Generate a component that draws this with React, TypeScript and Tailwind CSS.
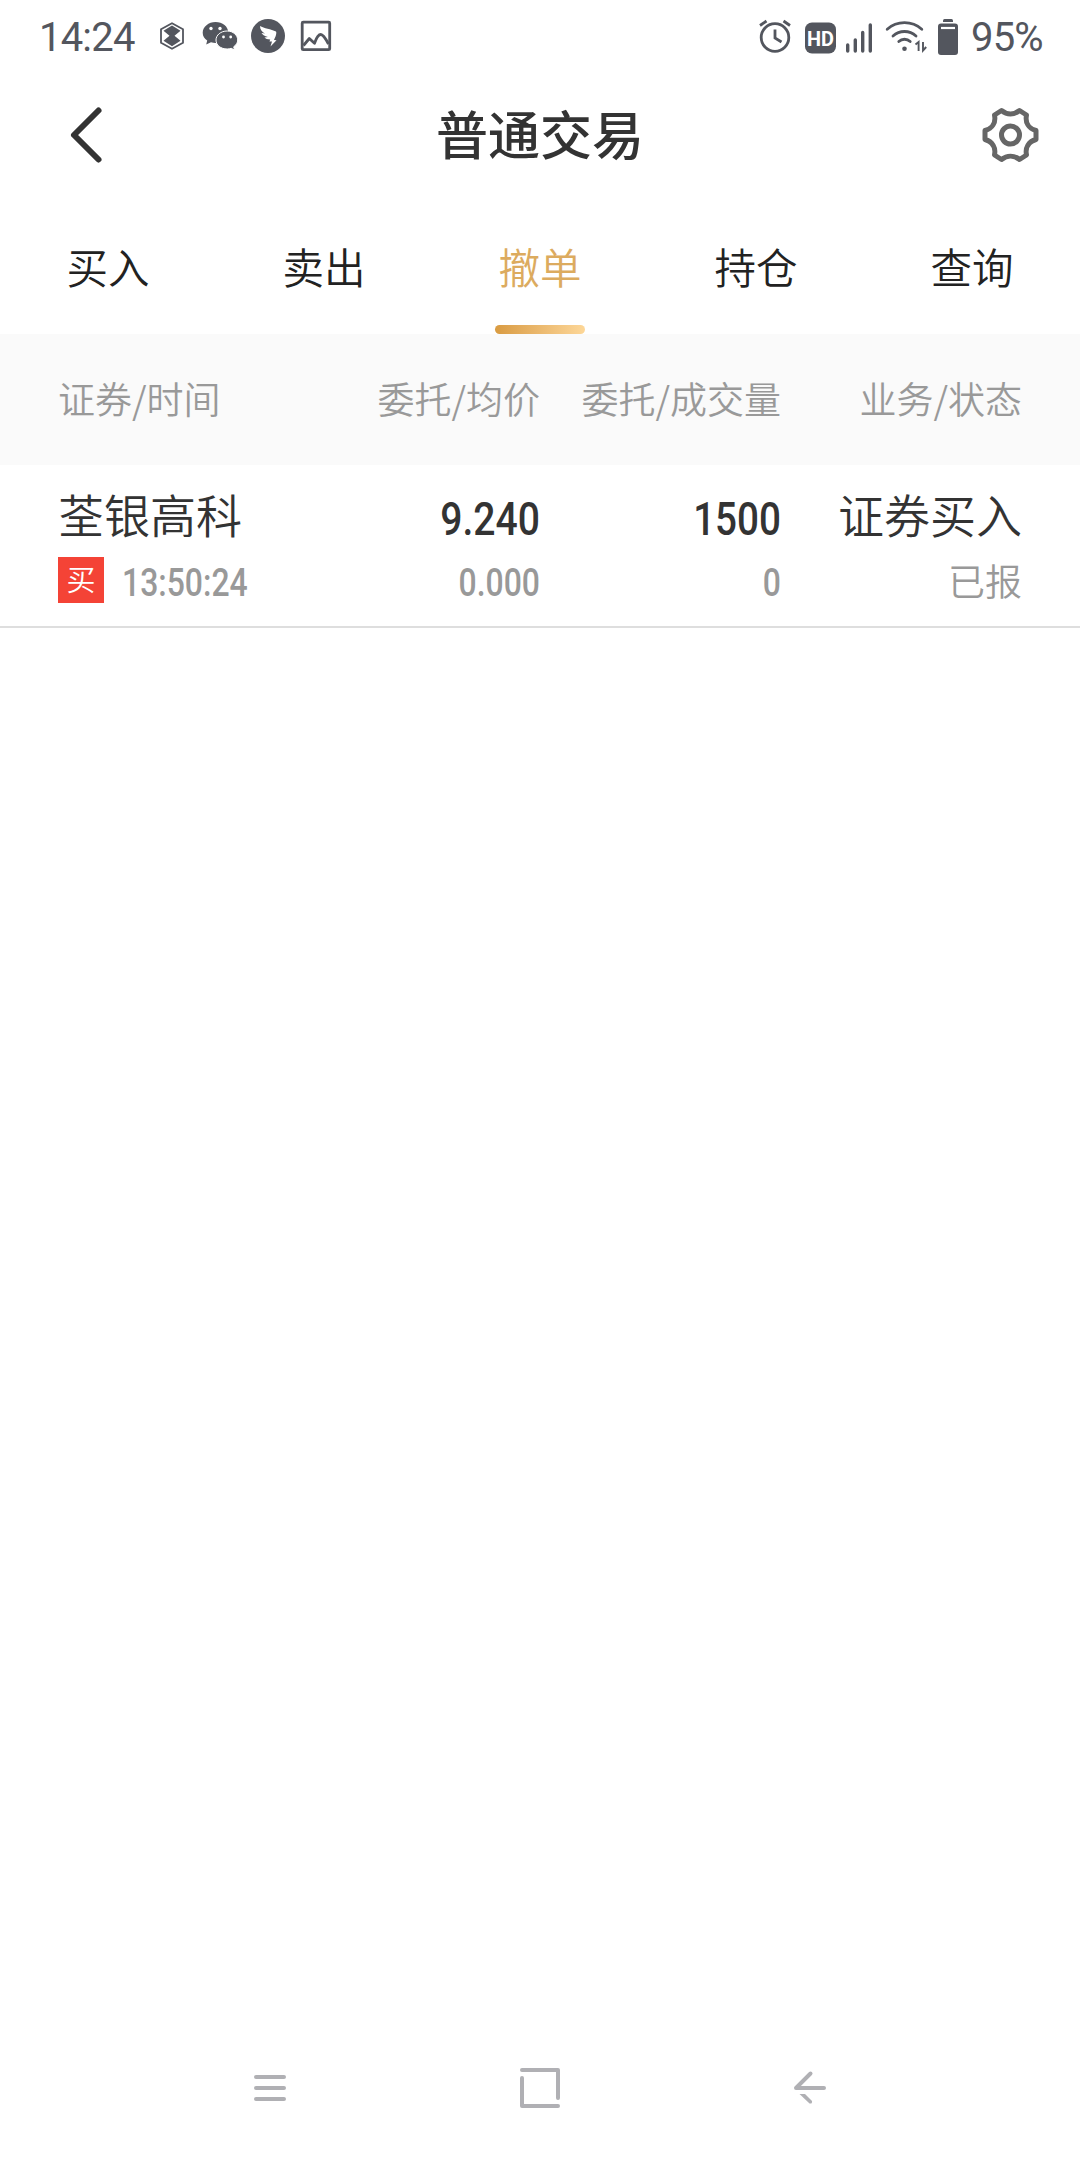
import React from 'react';

interface Order {
    name: string;
    side: string;
    time: string;
    price: string;
    avgPrice: string;
    amount: string;
    filled: string;
    business: string;
    status: string;
}

const tabs = ['买入', '卖出', '撤单', '持仓', '查询'];
const activeTab = '撤单';

const orders: Order[] = [
    {
        name: '荃银高科',
        side: '买',
        time: '13:50:24',
        price: '9.240',
        avgPrice: '0.000',
        amount: '1500',
        filled: '0',
        business: '证券买入',
        status: '已报',
    },
];

const StatusBar: React.FC = () => (
    <div className="flex h-[74px] items-center justify-between pl-[39px] pr-[36px] font-['Roboto',sans-serif] text-[40px] font-normal leading-none tracking-[-0.8px] text-[#53565e]">
        <div className="flex items-center">
            <span className="w-[99px] pt-[2px]">14:24</span>
            <svg width="190" height="54" viewBox="150 10 190 54" className="ml-[12px]" fill="none">
                {/* hexagon */}
                <path d="M172 23.2 183 29.3V42.7L172 48.8 161 42.7V29.3Z" stroke="#53565e" strokeWidth="1.8" />
                <path d="M172 25.500 180.500 30.800 174.500 35.800 180.500 40.800 172 46.200 163.500 40.800 169.500 35.800 163.500 30.800Z" fill="#53565e" />
                {/* chat bubbles */}
                <path d="M215.500 22C208.600 22 202.700 26.800 202.700 32.800C202.700 36.200 204.500 38.700 207.200 40.600L206.200 44.500L211 42.300C212.500 42.700 214 43 215.500 43C222.500 43 228.300 38.600 228.300 32.600C228.300 26.600 222.500 22 215.500 22Z" fill="#53565e" />
                <path d="M227.200 31C220.700 31 216 35.200 216 40C216 45.200 220.800 49 227.200 49C228.700 49 230 48.700 231.200 48.300L234.500 50L233.700 46.800C236.200 45 237.700 42.700 237.700 40C237.700 35.200 233 31 227.200 31Z" fill="#53565e" stroke="#fff" strokeWidth="1" />
                <circle cx="211" cy="28.500" r="1.700" fill="#fff" />
                <circle cx="220" cy="28.500" r="1.700" fill="#fff" />
                <circle cx="223.500" cy="37" r="1.400" fill="#fff" />
                <circle cx="230.700" cy="37" r="1.400" fill="#fff" />
                {/* wing badge */}
                <circle cx="268" cy="36" r="17" fill="#53565e" />
                <path d="M260 26C264 28.500 271 29 276 31.500C277 33 275.500 37 274 40L276.500 40.300L270.500 46.500L272 41.500H269.500L270.200 39.500C267.500 39.500 265.500 38.500 264.500 37.500L268 37C264.500 36 262 34.500 261.500 33L265 33.500C262 32 260 29.500 260 26Z" fill="#fff" />
                {/* picture */}
                <rect x="302.200" y="22.200" width="27.500" height="27.500" rx="1" stroke="#53565e" strokeWidth="2.800" />
                <path d="M303.500 45.500 309.300 38.500 314.500 43.300Q317.500 34.500 320.800 34.500Q323.500 34.500 328.500 44" stroke="#53565e" strokeWidth="2.800" strokeLinejoin="round" />
            </svg>
        </div>
        <div className="flex items-center">
            <svg width="212" height="54" viewBox="755 10 212 54" fill="none" stroke="#53565e">
                {/* alarm */}
                <circle cx="775" cy="37.500" r="13.800" strokeWidth="2.800" />
                <path d="M775 29.500V38L781.500 42M760 25.500 766.500 21M790 25.500 783.500 21" strokeWidth="2.800" />
                {/* hd */}
                <rect x="805" y="22.500" width="31" height="31" rx="7" fill="#53565e" stroke="none" />
                <text x="807" y="45.500" fontSize="21" fontWeight="700" letterSpacing="0" fill="#fff" stroke="none" textLength="27" lengthAdjust="spacingAndGlyphs">HD</text>
                {/* signal */}
                <path d="M847.700 45V51M855.300 40V51M862.700 32.500V51M870.300 25V51" strokeWidth="3.400" strokeLinecap="round" />
                {/* wifi */}
                <path d="M887.200 29.200C897 20.500 912 20.500 921.800 29.200M893 36C899.500 30 909.500 30 916 36M898.800 41.500C902 38.500 907 38.500 910.200 41.500" strokeWidth="2.800" strokeLinecap="round" />
                <circle cx="904.500" cy="48.700" r="2.300" fill="#53565e" stroke="none" />
                <path d="M915.500 44.500 918.600 42V51M923 42V50.500L926.200 47" strokeWidth="1.900" />
                {/* battery */}
                <path d="M943 22V20.500Q943 19 944.500 19H951.500Q953 19 953 20.500V22Z" fill="#53565e" stroke="none" />
                <rect x="938" y="23.500" width="20" height="31.500" rx="3" fill="#53565e" stroke="none" />
                <path d="M941 28H955" stroke="#fff" strokeWidth="2.200" />
            </svg>
            <span className="ml-[4px] w-[73px] pt-[2px]">95%</span>
        </div>
    </div>
);

const Header: React.FC = () => (
    <div className="grid h-[120px] grid-cols-[1fr_auto_1fr] items-center pl-[65px] pr-[65px]">
        <button className="flex">
            <svg width="44" height="60" viewBox="0 0 44 60" fill="none" stroke="#333" strokeWidth="6" strokeLinecap="round" strokeLinejoin="round">
                <path d="M33.500 6.500 9 31 33.500 55.500" />
            </svg>
        </button>
        <h1 className="pb-[2px] text-[52px] font-medium leading-none text-[#333]">普通交易</h1>
        <button className="-mr-[25px] flex justify-end">
            <svg width="60" height="60" viewBox="980 104 60 60" fill="none" stroke="#666" strokeWidth="5" strokeLinejoin="round">
                <path d="M1001.500 110.500C1007 115 1014 115 1019.500 110.500L1026.500 115C1025 122.500 1028.500 128.500 1036 130.500V139.500C1028.500 141.500 1025 147.500 1026.500 155L1019.500 159.500C1014 155 1007 155 1001.500 159.500L994.500 155C996 147.500 992.500 141.500 985 139.500V130.500C992.500 128.500 996 122.500 994.500 115Z" />
                <circle cx="1010.500" cy="135" r="9" />
            </svg>
        </button>
    </div>
);

const Tabs: React.FC = () => (
    <div className="grid h-[140px] grid-cols-5 text-[41.500px] text-[#222]">
        {tabs.map((tab) => (
            <button key={tab} className="relative flex items-start justify-center pt-[51px] leading-[42px]">
                <span className={tab === activeTab ? 'text-[#dcab5f]' : ''}>{tab}</span>
                {tab === activeTab && (
                    <span className="absolute bottom-0 h-[9px] w-[90px] rounded-full bg-linear-to-r from-[#d99b41] to-[#fdd798]"></span>
                )}
            </button>
        ))}
    </div>
);

const OrderRow: React.FC<{ order: Order }> = ({ order }) => (
    <div className="grid h-[163px] grid-cols-[242px_240px_241px_241px] grid-rows-[46px_46px] gap-y-[18px] border-b-2 border-[#dedede] pl-[58px] pt-[28px] text-right text-[37px] leading-[46px] text-[#999]">
        <span className="-mt-[3px] text-left text-[46px] text-[#333]">{order.name}</span>
        <span className="origin-right scale-x-[0.85] pt-[3px] font-['Roboto',sans-serif] text-[46px] font-medium text-[#333]">{order.price}</span>
        <span className="origin-right scale-x-[0.84] pt-[3px] font-['Roboto',sans-serif] text-[46px] font-medium text-[#333]">{order.amount}</span>
        <span className="-mt-[3px] text-[46px] text-[#333]">{order.business}</span>
        <div className="flex items-center">
            <span className="flex h-[46px] w-[46px] items-center justify-center bg-[#f44336] pb-[4px] text-[29px] text-white">{order.side}</span>
            <span className="ml-[18px] origin-left scale-x-[0.84] pt-[6px] font-['Roboto',sans-serif] text-[38px] font-medium">{order.time}</span>
        </div>
        <span className="origin-right scale-x-[0.84] pt-[3px] font-['Roboto',sans-serif] text-[38px] font-medium">{order.avgPrice}</span>
        <span className="origin-right scale-x-[0.84] pt-[3px] font-['Roboto',sans-serif] text-[38px] font-medium">{order.filled}</span>
        <span>{order.status}</span>
    </div>
);

const NavBar: React.FC = () => (
    <div className="flex h-[144px] items-center justify-center gap-[206px]">
        <svg width="64" height="64" viewBox="238 2056 64 64" fill="none" stroke="#b0b0b4" strokeWidth="4" strokeLinecap="round">
            <path d="M256 2077H284M256 2088H284M256 2099H284" />
        </svg>
        <svg width="64" height="64" viewBox="508 2056 64 64" fill="none" stroke="#b0b0b4" strokeWidth="4" strokeLinecap="round" strokeLinejoin="round">
            <path d="M522 2070H558V2098M522 2078V2106H558" />
        </svg>
        <svg width="64" height="64" viewBox="778 2056 64 64" fill="none" stroke="#b0b0b4" strokeWidth="4" strokeLinecap="round" strokeLinejoin="round">
            <path d="M824 2088H796L810.500 2073.500" />
            <path d="M799.500 2094H805L812 2101Q812.500 2104 809.500 2103.500Z" fill="#b0b0b4" stroke="none" />
        </svg>
    </div>
);

export default function App() {
    return (
        <div className="flex h-[2160px] w-[1080px] flex-col bg-white font-['Noto_Sans_CJK_SC',sans-serif] font-[350]">
            <StatusBar />
            <Header />
            <Tabs />
            <div className="grid h-[131px] grid-cols-[242px_240px_241px_241px] items-center bg-[#fafafa] pb-[2px] pl-[58px] text-right text-[37px] leading-none text-[#999]">
                <span className="text-left">证券/时间</span>
                <span>委托/均价</span>
                <span>委托/成交量</span>
                <span>业务/状态</span>
            </div>
            <div className="flex-1">
                {orders.map((order) => (
                    <OrderRow key={order.time} order={order} />
                ))}
            </div>
            <NavBar />
        </div>
    );
}
